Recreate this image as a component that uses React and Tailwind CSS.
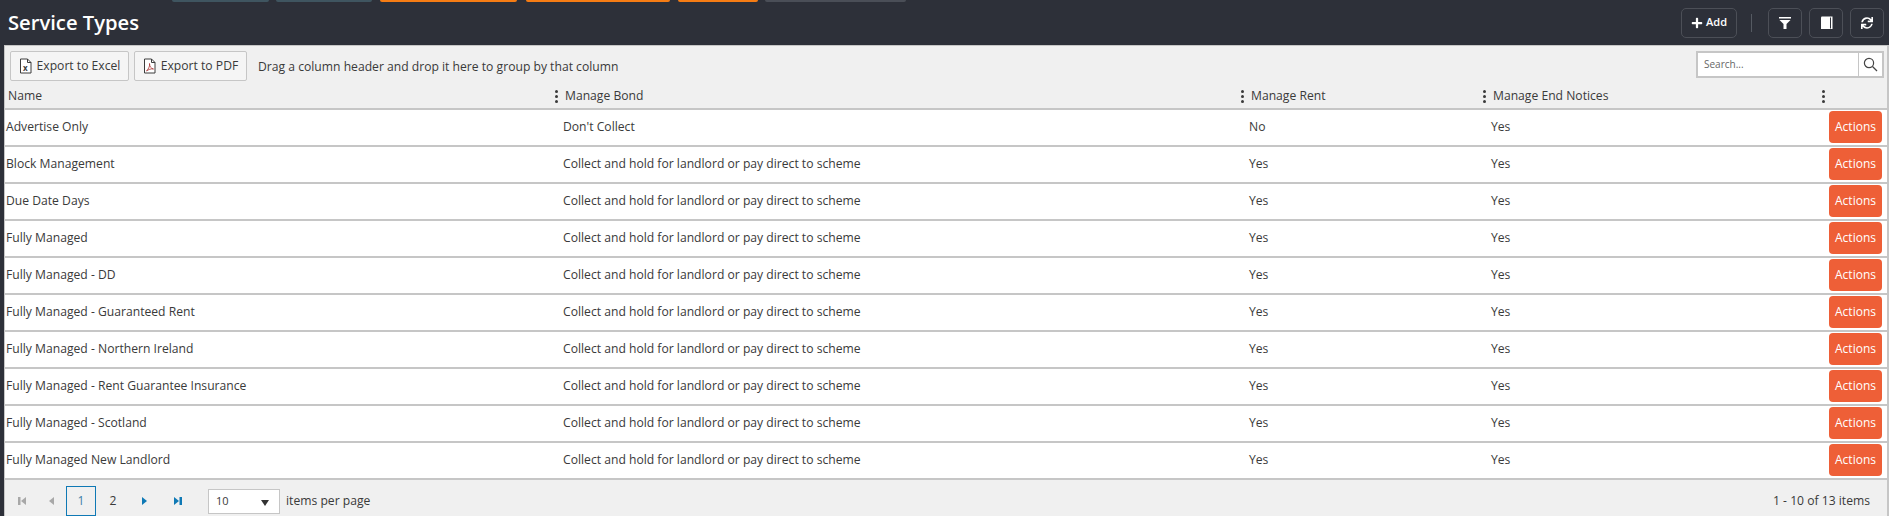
import React from "react";
import { FaPlus, FaSync } from "react-icons/fa";

const rows = [
  ["Advertise Only", "Don't Collect", "No", "Yes"],
  ["Block Management", "Collect and hold for landlord or pay direct to scheme", "Yes", "Yes"],
  ["Due Date Days", "Collect and hold for landlord or pay direct to scheme", "Yes", "Yes"],
  ["Fully Managed", "Collect and hold for landlord or pay direct to scheme", "Yes", "Yes"],
  ["Fully Managed - DD", "Collect and hold for landlord or pay direct to scheme", "Yes", "Yes"],
  ["Fully Managed - Guaranteed Rent", "Collect and hold for landlord or pay direct to scheme", "Yes", "Yes"],
  ["Fully Managed - Northern Ireland", "Collect and hold for landlord or pay direct to scheme", "Yes", "Yes"],
  ["Fully Managed - Rent Guarantee Insurance", "Collect and hold for landlord or pay direct to scheme", "Yes", "Yes"],
  ["Fully Managed - Scotland", "Collect and hold for landlord or pay direct to scheme", "Yes", "Yes"],
  ["Fully Managed New Landlord", "Collect and hold for landlord or pay direct to scheme", "Yes", "Yes"],
];

const cols = "grid grid-cols-[557px_686px_242px_339px_1fr]";

const Kebab = () => (
  <span className="flex flex-col gap-[2px] w-[3px] shrink-0 mt-[3px]">
    <span className="w-[3px] h-[3px] rounded-full bg-[#3a3a3a]" />
    <span className="w-[3px] h-[3px] rounded-full bg-[#3a3a3a]" />
    <span className="w-[3px] h-[3px] rounded-full bg-[#3a3a3a]" />
  </span>
);

const HeadCell = ({ children }) => (
  <div className="flex items-center justify-between pl-[3px] pr-[4px]">
    <span className="pt-[3px]">{children}</span>
    <Kebab />
  </div>
);

const TopTab = ({ w, c }) => (
  <div className={`h-[2px] rounded-b-[3px] ${w} ${c}`} />
);

const FileIcon = ({ children }) => (
  <svg width="13" height="16" viewBox="0 0 13 15" className="shrink-0">
    <path d="M1.5 .5H8.5L12 4V14.5H1.5Z" fill="#fff" stroke="#3c3c3c" />
    <path d="M8.5 .5V4H12" fill="none" stroke="#3c3c3c" />
    {children}
  </svg>
);

const HeaderBtn = ({ className, children }) => (
  <button className={`h-[30px] flex items-center justify-center rounded-[5px] border border-[#4c4f57] text-white ${className}`}>
    {children}
  </button>
);

const Arrow = ({ dir, bar, color }) => (
  <svg width="9" height="10" viewBox="0 0 9 10">
    {dir === "left" ? (
      <>
        {bar && <rect x="0" y="1" width="2.5" height="8" fill={color} />}
        <path d="M8 1V9L3 5Z" fill={color} />
      </>
    ) : (
      <>
        <path d="M1 1V9L6 5Z" fill={color} />
        {bar && <rect x="6.5" y="1" width="2.5" height="8" fill={color} />}
      </>
    )}
  </svg>
);

export default function App() {
  return (
    <div className="h-[516px] overflow-hidden bg-[#2d3039] text-[12.15px] text-[#3a3a3a] font-['Open_Sans',sans-serif]">
      <header className="relative h-[45px] flex items-center pl-[8px] pr-[5px]">
        <div className="absolute top-0 left-[172px] flex">
          <TopTab w="w-[97px] mr-[7px]" c="bg-[#3f5560]" />
          <TopTab w="w-[96px] mr-[8px]" c="bg-[#3f5560]" />
          <TopTab w="w-[137px] mr-[9px]" c="bg-[#f57c14]" />
          <TopTab w="w-[144px] mr-[8px]" c="bg-[#f57c14]" />
          <TopTab w="w-[80px] mr-[7px]" c="bg-[#f57c14]" />
          <TopTab w="w-[141px]" c="bg-[#4a4e57]" />
        </div>
        <h1 className="text-[20.2px] font-semibold text-white leading-none">Service Types</h1>
        <div className="ml-auto flex items-center">
          <HeaderBtn className="w-[56px] gap-[3px] text-[11px] font-semibold">
            <FaPlus className="w-[12px] h-[12px]" />
            Add
          </HeaderBtn>
          <span className="w-px h-[18px] bg-[#555a62] ml-[14px] mr-[16px]" />
          <HeaderBtn className="w-[34px] mr-[7px]">
            <svg width="12" height="12" viewBox="0 0 12 12" fill="#fff">
              <rect x="0" y="0" width="12" height="1.5" />
              <path d="M0.5 3H11.5L7.5 7V12H4.5V7Z" />
            </svg>
          </HeaderBtn>
          <HeaderBtn className="w-[34px] mr-[7px]">
            <svg width="13" height="13" viewBox="0 0 13 13">
              <path d="M1 1.5Q1 .5 2 .5H12.5V13H1Z" fill="#fff" />
              <rect x="10" y="1.5" width="1" height="11" fill="#2d3039" />
            </svg>
          </HeaderBtn>
          <HeaderBtn className="w-[34px]">
            <FaSync className="w-[12px] h-[12px]" />
          </HeaderBtn>
        </div>
      </header>

      <main className="ml-[4px] h-[471px] bg-[#f0f0f0] border-l border-r-2 border-t border-[#c6c6c6] flex flex-col">
        <div className="h-[35px] shrink-0 flex items-start pt-[5px] pl-[5px] pr-[3px]">
          <button className="w-[119px] h-[30px] flex items-center justify-center gap-[5px] bg-[#f5f5f5] border border-[#c6c6c6] rounded-[2px]">
            <FileIcon>
              <text x="4" y="12" fontSize="8" fontWeight="700" fill="#3c3c3c">x</text>
            </FileIcon>
            Export to Excel
          </button>
          <button className="ml-[5px] w-[113px] h-[30px] flex items-center justify-center gap-[5px] bg-[#f5f5f5] border border-[#c6c6c6] rounded-[2px]">
            <FileIcon>
              <path d="M3.5 12.5C6 10 7 7 6.5 5C6.5 8 8 10 10.5 10.5C8 10 5.5 11 3.5 12.5Z" fill="none" stroke="#a33" strokeWidth=".8" />
            </FileIcon>
            Export to PDF
          </button>
          <span className="ml-[11px] mt-[7px] leading-[18px]">Drag a column header and drop it here to group by that column</span>
          <div className="ml-auto w-[188px] h-[27px] flex border-2 border-[#c6c6c6] bg-white">
            <div className="flex-1 flex items-center pl-[6px] text-[10px] text-[#666] border-r border-[#c6c6c6]">Search...</div>
            <div className="w-[23px] flex items-center justify-center">
              <svg width="15" height="15" viewBox="0 0 15 15" fill="none" stroke="#444" strokeWidth="1.2">
                <circle cx="6" cy="6" r="4.6" />
                <path d="M9.5 9.5L14 14" />
              </svg>
            </div>
          </div>
        </div>

        <div className={`${cols} h-[29px] shrink-0 border-b-2 border-[#c6c6c6]`}>
          <HeadCell>Name</HeadCell>
          <HeadCell>Manage Bond</HeadCell>
          <HeadCell>Manage Rent</HeadCell>
          <HeadCell>Manage End Notices</HeadCell>
          <div />
        </div>

        {rows.map((r) => (
          <div key={r[0]} className={`${cols} h-[37px] shrink-0 bg-white border-b-2 border-[#c6c6c6] items-center`}>
            <div className="pl-[1px]">{r[0]}</div>
            <div className="pl-[1px]">{r[1]}</div>
            <div className="pl-[1px]">{r[2]}</div>
            <div className="pl-[1px]">{r[3]}</div>
            <div>
              <button className="block w-[53px] h-[32px] -mt-[1px] rounded-[4px] bg-[#ee5f37] text-white text-[12px]">Actions</button>
            </div>
          </div>
        ))}

        <div className="flex-1 flex items-center pt-[6px] pl-[3px] pr-[17px]">
          <span className="w-[28px] flex justify-center"><Arrow dir="left" bar color="#a8a8a8" /></span>
          <span className="w-[28px] flex justify-center"><Arrow dir="left" color="#a8a8a8" /></span>
          <span className="w-[30px] h-[30px] ml-[2px] flex items-center justify-center border border-[#0f79b5] text-[#3d7fa8]">1</span>
          <span className="w-[34px] text-center">2</span>
          <span className="w-[30px] flex justify-center"><Arrow dir="right" color="#0f79b5" /></span>
          <span className="w-[34px] flex justify-center"><Arrow dir="right" bar color="#0f79b5" /></span>
          <div className="ml-[14px] w-[72px] h-[25px] flex items-center justify-between pl-[7px] pr-[10px] bg-white border border-[#c6c6c6] text-[11px]">
            10
            <span className="w-0 h-0 mt-[3px] border-x-[4px] border-x-transparent border-t-[6px] border-t-[#333]" />
          </div>
          <span className="ml-[6px]">items per page</span>
          <span className="ml-auto">1 - 10 of 13 items</span>
        </div>
      </main>
    </div>
  );
}
